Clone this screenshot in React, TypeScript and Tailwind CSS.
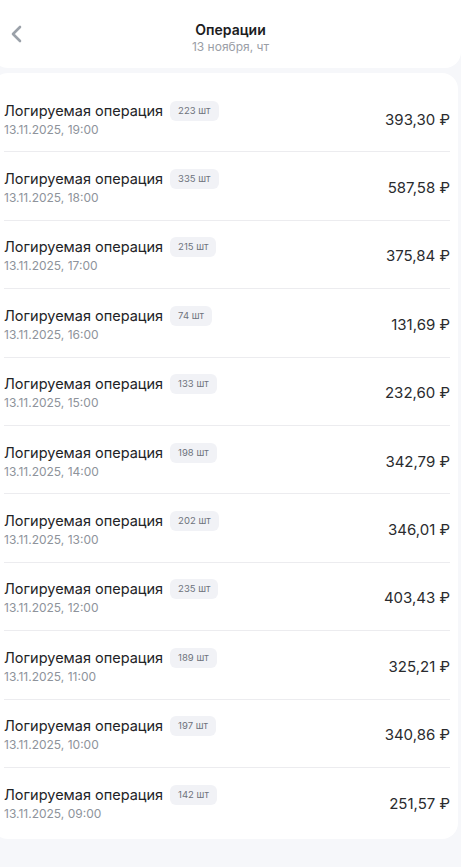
import React from "react";

const rows = [
  { qty: 223, time: "19:00", amount: "393,30" },
  { qty: 335, time: "18:00", amount: "587,58" },
  { qty: 215, time: "17:00", amount: "375,84" },
  { qty: 74, time: "16:00", amount: "131,69" },
  { qty: 133, time: "15:00", amount: "232,60" },
  { qty: 198, time: "14:00", amount: "342,79" },
  { qty: 202, time: "13:00", amount: "346,01" },
  { qty: 235, time: "12:00", amount: "403,43" },
  { qty: 189, time: "11:00", amount: "325,21" },
  { qty: 197, time: "10:00", amount: "340,86" },
  { qty: 142, time: "09:00", amount: "251,57" },
];

export default function App() {
  return (
    <div
      className="w-[461px] h-[867px] overflow-hidden bg-[#f6f7fa] flex flex-col"
      style={{ fontFamily: "Inter, 'Noto Sans', sans-serif" }}
    >
      <div className="ml-[-8px] h-[68px] bg-white rounded-b-2xl flex items-center relative shrink-0">
        <div className="absolute left-[16px] top-[25px]">
          <svg width="16" height="18" viewBox="0 0 16 18" fill="none">
            <path d="M12 2 L5 9 L12 16" stroke="#9ba1a9" strokeWidth="2.6" strokeLinecap="round" strokeLinejoin="round" />
          </svg>
        </div>
        <div className="flex-1 flex flex-col items-center pt-[7px] pl-[8px]">
          <div className="text-[14px] leading-[18px] font-semibold text-[#1c1c1e]">Операции</div>
          <div className="text-[12px] leading-[16px] text-[#9a9ea6]">13 ноября, чт</div>
        </div>
      </div>
      <div className="ml-[-8px] mr-[3px] mt-[5px] bg-white rounded-2xl pt-[11px] pb-[3px] pl-[12px] pr-[8px] shrink-0">
        {rows.map((r, i) => (
          <div
            key={i}
            className={`h-[68.4px] pt-[3px] flex items-center justify-between ${i < rows.length - 1 ? "border-b border-[#ececef]" : ""}`}
          >
            <div className="flex flex-col">
              <div className="flex items-center">
                <span className="text-[14.5px] leading-[20px] text-[#222326]">Логируемая операция</span>
                <span className="ml-[7px] h-[20px] px-[8px] rounded-[6px] bg-[#f1f2f6] text-[9.5px] leading-[20px] text-[#6e737c]">
                  {r.qty} шт
                </span>
              </div>
              <div className="mt-[1px] text-[12px] leading-[16px] text-[#8e939b]">13.11.2025, {r.time}</div>
            </div>
            <div className="pt-[1px] text-[15px] leading-[20px] text-[#2a2b2e]">{r.amount} ₽</div>
          </div>
        ))}
      </div>
    </div>
  );
}
